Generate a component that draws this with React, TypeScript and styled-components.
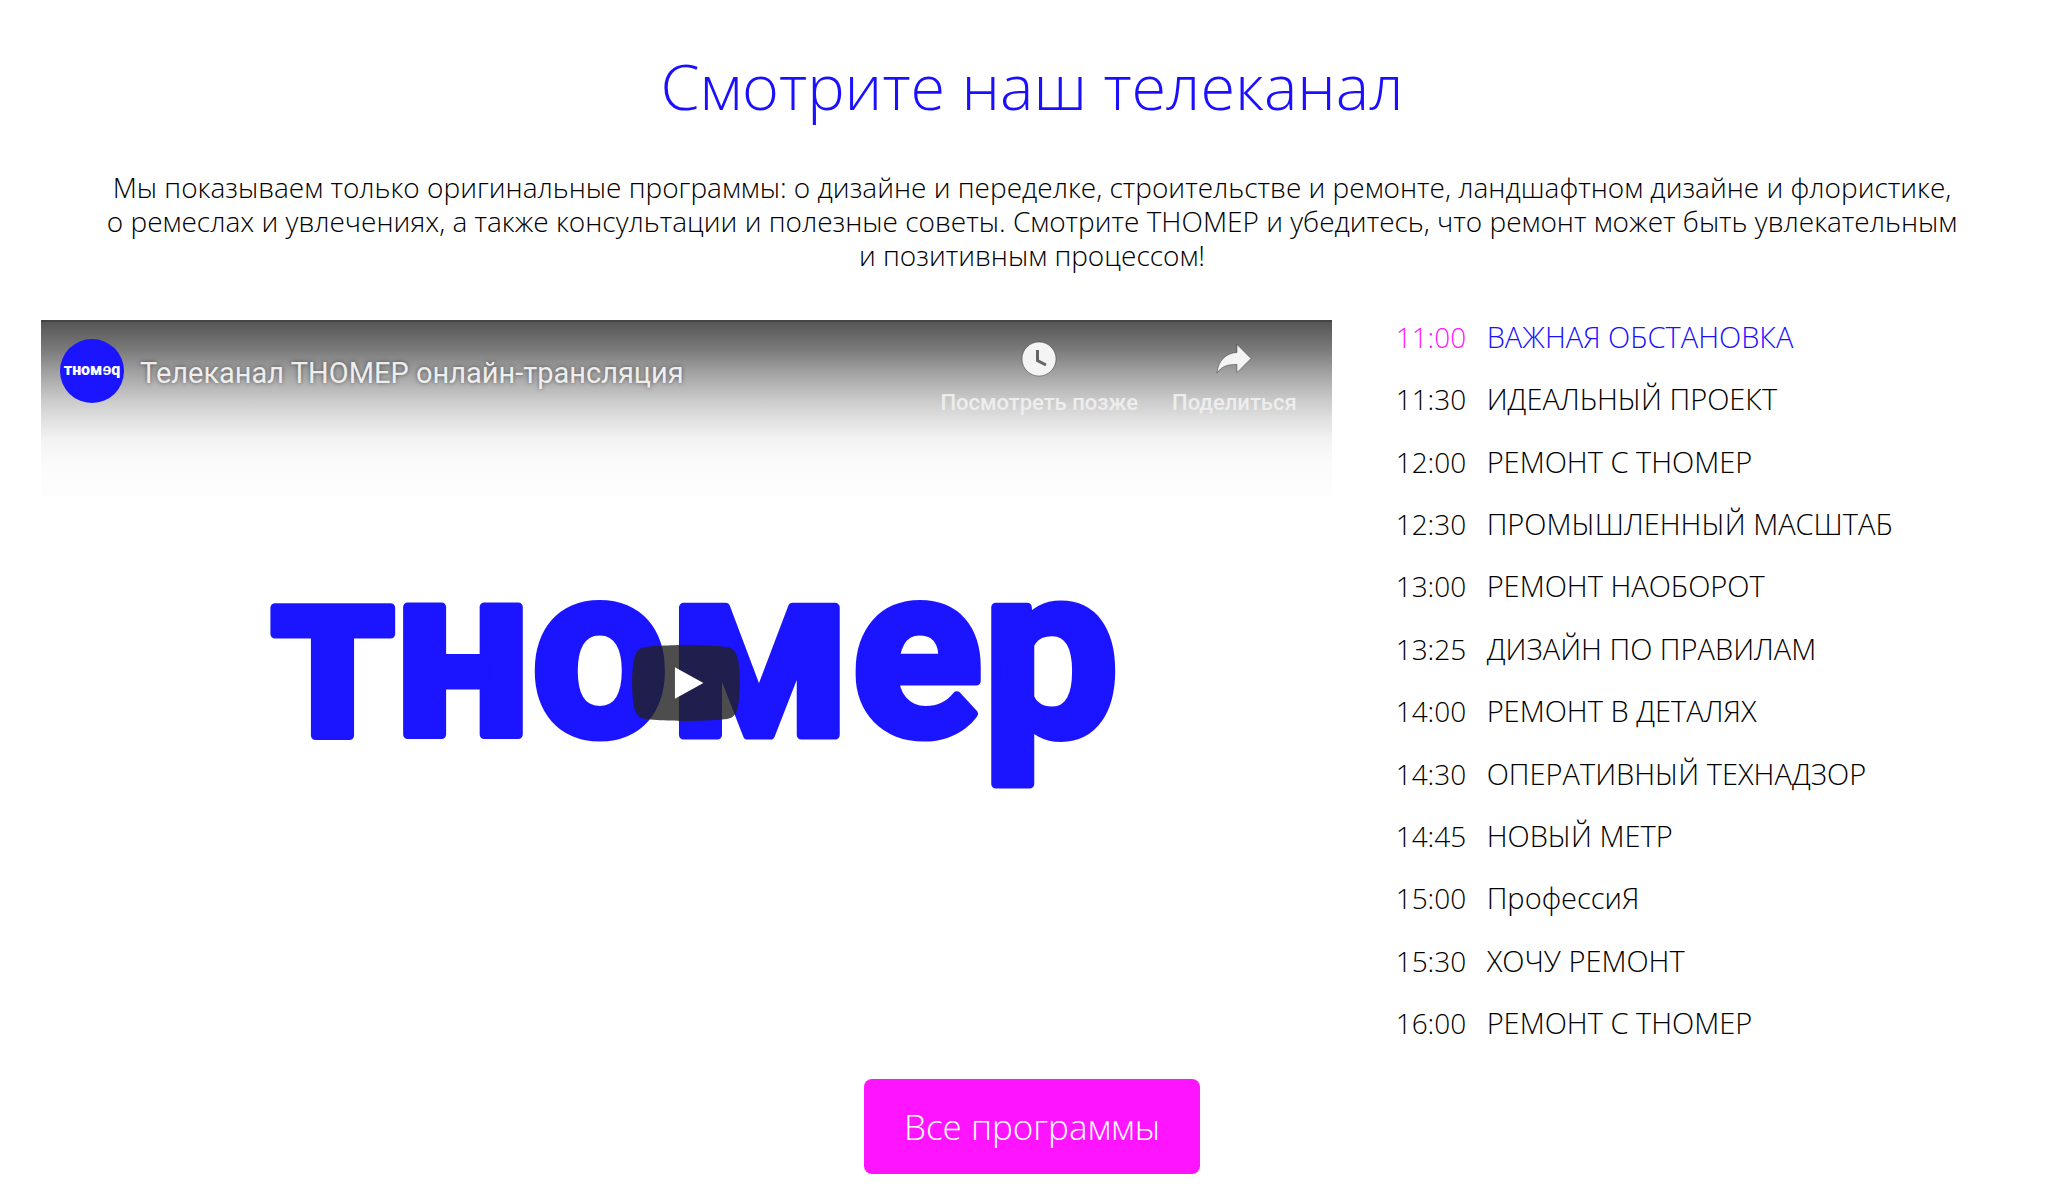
import React from "react";
import styled, { createGlobalStyle } from "styled-components";

const BLUE = "#1a10ff";
const MAGENTA = "#ff14ff";
const SANS = `"Open Sans", "Noto Sans", sans-serif`;

const GlobalStyle = createGlobalStyle`
  *, *::before, *::after { box-sizing: border-box; }
  body {
    margin: 0;
    background: #fff;
    color: #000;
    font-family: ${SANS};
    font-weight: 300;
  }
`;

const Page = styled.main`
  display: flex;
  flex-direction: column;
  align-items: center;
  padding: 42px 39px 28px 41px;
`;

const Heading = styled.h1`
  margin: 0;
  color: ${BLUE};
  font-size: 63px;
  line-height: 88px;
  font-weight: 300;
  text-align: center;
`;

const Intro = styled.p`
  margin: 40px 0 48px;
  font-size: 28px;
  line-height: 34px;
  text-align: center;
`;

const Columns = styled.div`
  display: grid;
  grid-template-columns: 2fr 1fr;
  gap: 46px;
  width: 100%;
`;

const Player = styled.section`
  position: relative;
  aspect-ratio: 16 / 9;
  overflow: hidden;
  background: #fff;
  font-family: Roboto, sans-serif;
`;

const Poster = styled.svg`
  display: block;
  width: 100%;
  height: 100%;
`;

const Shade = styled.div`
  position: absolute;
  inset: 0 0 auto;
  height: 176px;
  border-top: 2px solid #444;
  background: linear-gradient(
    #565656 0,
    #7b7b7b 28px,
    #a4a4a4 52px,
    #cacaca 78px,
    #e1e1e1 98px,
    #f3f3f3 118px,
    #fbfbfb 142px,
    #fdfdfd 100%
  );
`;

const TopBar = styled.header`
  position: absolute;
  inset: 0 0 auto;
  display: flex;
  align-items: flex-start;
  padding: 19px;
`;

const Avatar = styled.svg`
  flex: none;
  width: 64px;
  height: 64px;
`;

const VideoTitle = styled.a`
  flex: 1;
  margin-left: 16px;
  color: #eee;
  font-size: 29px;
  line-height: 68px;
  font-weight: 400;
  text-decoration: none;
  text-shadow: 0 0 4px rgba(0, 0, 0, 0.5);
`;

const Actions = styled.div`
  display: flex;
  gap: 34px;
  padding-right: 16px;
`;

const Action = styled.button`
  display: flex;
  flex-direction: column;
  align-items: center;
  gap: 8px;
  padding: 0;
  border: 0;
  background: none;
  color: #ededed;
  font: 500 22px/32px Roboto, sans-serif;
  cursor: pointer;
`;

const ActionIcon = styled.svg`
  width: 40px;
  height: 40px;
  fill: #f4f4f4;
  stroke: rgba(0, 0, 0, 0.35);
  stroke-width: 1;
`;

const PlayButton = styled.button`
  position: absolute;
  inset: 0;
  margin: auto;
  width: 108px;
  height: 76px;
  padding: 0;
  border: 0;
  background: none;
  cursor: pointer;
`;

const PlayIcon = styled.svg`
  display: block;
  width: 100%;
  height: 100%;
`;

const Schedule = styled.ul`
  display: flex;
  flex-direction: column;
  justify-content: space-between;
  margin: 0;
  padding: 0 0 6px 18px;
  list-style: none;
`;

const Programme = styled.li<{ $current?: boolean }>`
  display: flex;
  gap: 20px;
  color: ${(p) => (p.$current ? BLUE : "inherit")};
  font-size: 29px;
  line-height: 34px;

  time {
    width: 71px;
    color: ${(p) => (p.$current ? MAGENTA : "inherit")};
    font-size: 28px;
  }
`;

const AllButton = styled.a`
  margin-top: 33px;
  padding: 0 40px;
  border-radius: 8px;
  background: ${MAGENTA};
  color: #fff;
  font-size: 35px;
  line-height: 95px;
  text-decoration: none;
`;

const programmes = [
  ["11:00", "ВАЖНАЯ ОБСТАНОВКА"],
  ["11:30", "ИДЕАЛЬНЫЙ ПРОЕКТ"],
  ["12:00", "РЕМОНТ С ТНОМЕР"],
  ["12:30", "ПРОМЫШЛЕННЫЙ МАСШТАБ"],
  ["13:00", "РЕМОНТ НАОБОРОТ"],
  ["13:25", "ДИЗАЙН ПО ПРАВИЛАМ"],
  ["14:00", "РЕМОНТ В ДЕТАЛЯХ"],
  ["14:30", "ОПЕРАТИВНЫЙ ТЕХНАДЗОР"],
  ["14:45", "НОВЫЙ МЕТР"],
  ["15:00", "ПрофессиЯ"],
  ["15:30", "ХОЧУ РЕМОНТ"],
  ["16:00", "РЕМОНТ С ТНОМЕР"],
];

export default function App() {
  return (
    <>
      <GlobalStyle />
      <Page>
        <Heading>Смотрите наш телеканал</Heading>
        <Intro>
          Мы показываем только оригинальные программы: о дизайне и переделке, строительстве и ремонте, ландшафтном дизайне и флористике,
          <br />
          о ремеслах и увлечениях, а также консультации и полезные советы. Смотрите ТНОМЕР и убедитесь, что ремонт может быть увлекательным
          <br />
          и позитивным процессом!
        </Intro>
        <Columns>
          <Player>
            <Poster viewBox="0 0 1291 726">
              <text
                x="654"
                y="415"
                textAnchor="middle"
                fontFamily="Roboto, sans-serif"
                fontWeight="700"
                fontSize="242"
                fill="#1a14ff"
                stroke="#1a14ff"
                strokeWidth="9"
                strokeLinejoin="round"
              >
                тномер
              </text>
            </Poster>
            <Shade />
            <TopBar>
              <Avatar viewBox="0 0 64 64">
                <circle cx="32" cy="32" r="32" fill="#1a14ff" />
                <text x="32" y="36" textAnchor="middle" fontFamily="Roboto, sans-serif" fontWeight="900" fontSize="16" fill="#fff">
                  тномɘq
                </text>
              </Avatar>
              <VideoTitle href="#">Телеканал ТНОМЕР онлайн-трансляция</VideoTitle>
              <Actions>
                <Action type="button">
                  <ActionIcon viewBox="0 0 40 40">
                    <circle cx="20" cy="20" r="17" />
                    <path d="M18.500 11v10.500l8.500 4.500" fill="none" stroke="#666" strokeWidth="3" />
                  </ActionIcon>
                  Посмотреть позже
                </Action>
                <Action type="button">
                  <ActionIcon viewBox="0 0 40 40">
                    <path d="M23 5.500 37 19.500 23 33.500V25.500C13 25 7 28 3 34 4 22 12 14 23 13.500Z" />
                  </ActionIcon>
                  Поделиться
                </Action>
              </Actions>
            </TopBar>
            <PlayButton type="button" aria-label="Смотреть">
              <PlayIcon viewBox="0 0 68 48">
                <path
                  d="M66.520 7.740c-.780-2.930-2.490-5.410-5.420-6.190C55.790.130 34 0 34 0S12.210.130 6.900 1.550c-2.930.780-4.630 3.260-5.420 6.190C.060 13.050 0 24 0 24s.060 10.950 1.480 16.260c.780 2.930 2.490 5.410 5.420 6.190C12.210 47.870 34 48 34 48s21.790-.130 27.100-1.550c2.930-.780 4.640-3.260 5.420-6.190C67.940 34.950 68 24 68 24s-.060-10.950-1.480-16.260z"
                  fill="#212121"
                  fillOpacity="0.8"
                />
                <path d="M45 24 27 14v20" fill="#fff" />
              </PlayIcon>
            </PlayButton>
          </Player>
          <Schedule>
            {programmes.map(([time, title], i) => (
              <Programme key={time} $current={i === 0}>
                <time>{time}</time>
                <span>{title}</span>
              </Programme>
            ))}
          </Schedule>
        </Columns>
        <AllButton href="#">Все программы</AllButton>
      </Page>
    </>
  );
}
